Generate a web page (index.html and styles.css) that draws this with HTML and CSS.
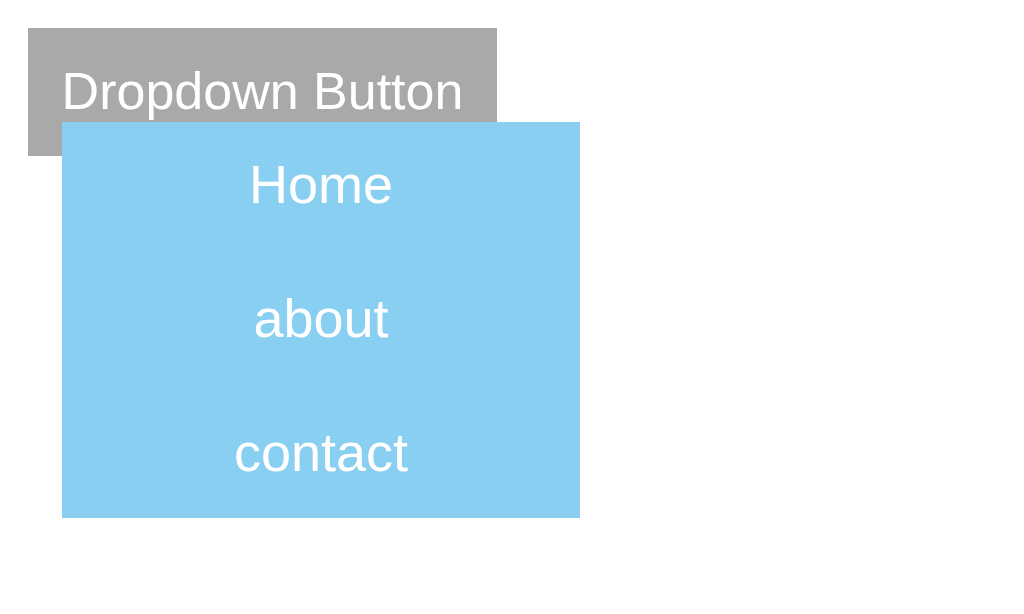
FILE: index.html
```html
<!DOCTYPE html>
<html lang="en">
<head>
  <meta charset="UTF-8" />
  <meta name="viewport" content="width=device-width, initial-scale=1.0"/>
  <title>Dropdown</title>
  <link rel="stylesheet" href="styles.css">
</head>
<body>
  <div class="dropdown">
    <button class="dropbtn">Dropdown Button</button>
    <!-- menu is shown open, dropped over the button -->
    <div class="dropdown-content">
      <a href="#">Home</a>
      <a href="#">about</a>
      <a href="#">contact</a>
    </div>
  </div>
</body>
</html>
```

FILE: styles.css
```css
:root {
  --btn-bg:  #a9a9a9;
  --menu-bg: #88cff1;
  --white:   #fff;
}

* { box-sizing: border-box; margin: 0; padding: 0; }

body {
  min-height: 100vh;
  background: var(--white);
  font-family: "Liberation Sans", Arial, sans-serif;
  padding: 28px;
}

.dropdown {
  position: relative;
  display: inline-block;
}

.dropbtn {
  display: block;
  width: 469px;
  height: 128px;
  padding: 33px 0 35px;
  background: var(--btn-bg);
  color: var(--white);
  border: none;
  font-family: inherit;
  font-size: 52px;
  line-height: normal;
  text-align: center;
  cursor: pointer;
}

.dropdown-content {
  position: absolute;
  top: 94px;
  left: 34px;
  width: 518px;
  height: 396px;
  padding-top: 6px;
  display: flex;
  flex-direction: column;
  gap: 13px;
  background: var(--menu-bg);
  text-align: center;
}

.dropdown-content a {
  display: block;
  padding: 25px 0 34px;
  color: var(--white);
  font-size: 54px;
  line-height: normal;
  text-decoration: none;
}
```
